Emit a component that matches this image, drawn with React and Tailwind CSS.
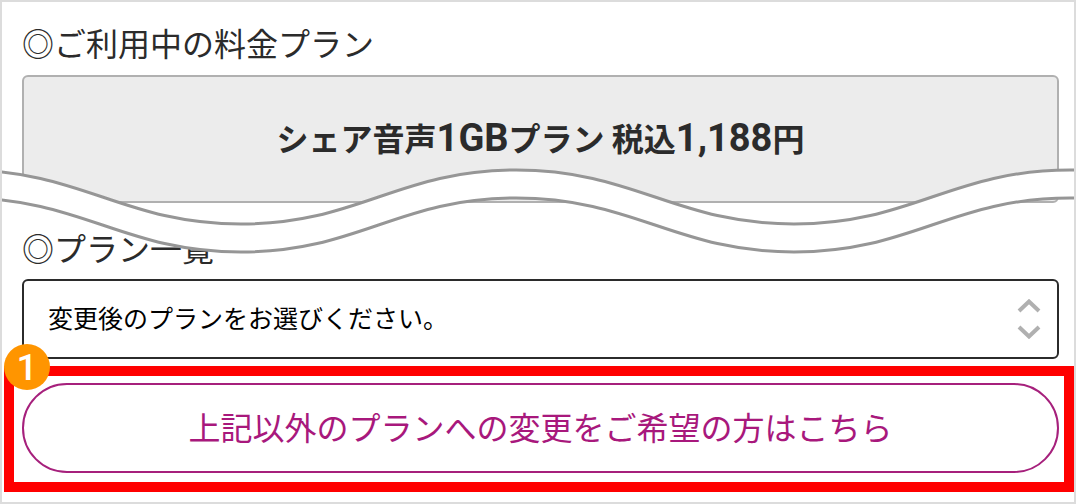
export default function App() {
  return (
    <main className="relative mr-px border-2 border-[#dcdcdc] bg-white pt-4 pr-[15px] pb-[10px] pl-5 font-['Noto_Sans_CJK_JP',sans-serif] text-[#2b2b2b]">
      <h2 className="text-[32px] leading-[48px]">◎ご利用中の料金プラン</h2>
      <div className="mt-[9px] flex h-32 items-center justify-center rounded-md border-2 border-[#b0b0b0] bg-[#ececec] pb-1">
        <p className="text-[32px] leading-[48px] font-bold">
          シェア音声<span className="font-['Roboto',sans-serif] text-[38px]">1GB</span>プラン 税込
          <span className="font-['Roboto',sans-serif] text-[38px]">1,188</span>円
        </p>
      </div>

      <label htmlFor="plan" className="mt-5 block text-[32px] leading-[48px]">
        ◎プラン一覧
      </label>
      <div className="relative mt-2">
        <select
          id="plan"
          className="block h-20 w-full appearance-none rounded-md border-2 border-[#2b2b2b] bg-white px-6 pb-0.5 text-[25px] text-black"
        >
          <option>変更後のプランをお選びください。</option>
        </select>
        <svg
          className="pointer-events-none absolute top-5 right-[18px] h-10 w-6"
          viewBox="0 0 24 40"
          fill="none"
          stroke="#b0b0b0"
          strokeWidth="4"
          aria-hidden="true"
        >
          <path d="M2 12 12 2.500 22 12M2 28 12 37.500 22 28" />
        </svg>
      </div>

      <div className="relative -mr-[15px] -ml-[18px] mt-[7px] border-[10px] border-[#ff0000] pt-[7px] pr-[5px] pb-[9px] pl-2">
        <button
          type="button"
          className="block h-[90px] w-full rounded-full border-2 border-[#a6207c] pb-1 text-[32px] leading-[48px] text-[#a8187c]"
        >
          上記以外のプランへの変更をご希望の方はこちら
        </button>
        <span className="absolute -top-8 -left-[10px] flex size-[46px] items-center justify-center rounded-full bg-[#ff9500] font-['Roboto',sans-serif] text-[37px] leading-none font-medium text-white">
          1
        </span>
      </div>

      <svg
        className="pointer-events-none absolute inset-x-0 top-[164px] h-[90px] w-full"
        viewBox="0 0 1072 90"
        preserveAspectRatio="none"
        strokeWidth="3"
        aria-hidden="true"
      >
        <path
          fill="#fff"
          d="M-38 4C80 4 121 58 239 58S396 4 514 4 674 58 792 58 950 4 1068 4H1076V32H1068C950 32 910 86 792 86S632 32 514 32 357 86 239 86 80 32-38 32Z"
        />
        <path
          fill="none"
          stroke="#969696"
          d="M-38 4C80 4 121 58 239 58S396 4 514 4 674 58 792 58 950 4 1068 4H1076M-38 32C80 32 121 86 239 86S396 32 514 32 674 86 792 86 950 32 1068 32H1076"
        />
      </svg>
    </main>
  );
}
